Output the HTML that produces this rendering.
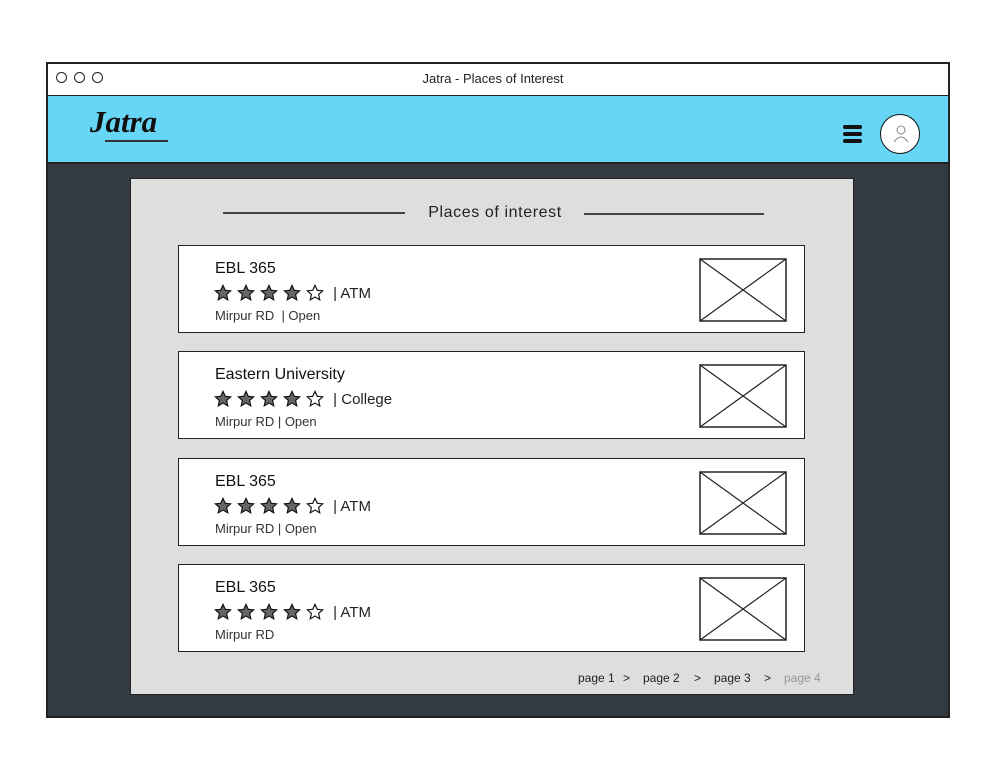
<!DOCTYPE html>
<html><head><meta charset="utf-8"><style>
body{margin:0;width:986px;height:774px;background:#fff;position:relative;font-family:"Liberation Sans",sans-serif;overflow:hidden}
.abs{position:absolute;box-sizing:border-box}
.card{position:absolute;left:178px;width:627px;height:88px;background:#fff;border:1.5px solid #222;box-sizing:border-box}
.t{position:absolute;left:36px;top:14px;font-size:16px;color:#111}
.r{position:absolute;left:35px;top:38px;display:flex;align-items:center;font-size:15px;color:#222}
.r svg{margin-right:5px}
.m{position:absolute;left:36px;top:62px;font-size:13px;color:#333}
.img{position:absolute;left:520px;top:12px;width:88px;height:64px}
.pg{position:absolute;top:671px;font-size:12px;color:#222}
</style></head><body>
<div class="abs" style="left:46px;top:62px;width:904px;height:656px;border:2px solid #222;background:#333a42"></div>
<div class="abs" style="left:48px;top:64px;width:900px;height:32px;background:#fff;border-bottom:1.5px solid #222"></div>
<div class="abs" style="left:56px;top:72px;width:11px;height:11px;border:1.5px solid #222;border-radius:50%"></div>
<div class="abs" style="left:74px;top:72px;width:11px;height:11px;border:1.5px solid #222;border-radius:50%"></div>
<div class="abs" style="left:92px;top:72px;width:11px;height:11px;border:1.5px solid #222;border-radius:50%"></div>
<div class="abs" style="left:0;width:986px;top:71px;text-align:center;font-size:13px;color:#222">Jatra - Places of Interest</div>
<div class="abs" style="left:48px;top:96px;width:900px;height:68px;background:#67d5f5;border-bottom:2px solid #222"></div>
<div class="abs" style="left:90px;top:104px;font-family:'Liberation Serif',serif;font-style:italic;font-weight:bold;font-size:31px;color:#111">Jatra</div>
<div class="abs" style="left:105px;top:140px;width:63px;height:2px;background:#333"></div>
<div class="abs" style="left:843px;top:125px;width:19px;height:4px;background:#111;border-radius:2px"></div>
<div class="abs" style="left:843px;top:132px;width:19px;height:4px;background:#111;border-radius:2px"></div>
<div class="abs" style="left:843px;top:139px;width:19px;height:4px;background:#111;border-radius:2px"></div>
<div class="abs" style="left:880px;top:114px;width:40px;height:40px;border:1.5px solid #111;border-radius:50%;background:#fff"></div>
<svg class="abs" style="left:892px;top:124px" width="18" height="20"><circle cx="9" cy="6" r="4" fill="none" stroke="#888"/><path d="M2 18 Q9 8 16 18" fill="none" stroke="#888"/></svg>
<div class="abs" style="left:130px;top:178px;width:724px;height:517px;background:#dedede;border:1.5px solid #222"></div>
<div class="abs" style="left:223px;top:212px;width:182px;height:1.5px;background:#444"></div>
<div class="abs" style="left:584px;top:213px;width:180px;height:1.5px;background:#444"></div>
<div class="abs" style="left:405px;top:204px;width:180px;text-align:center;font-size:16px;letter-spacing:0.6px;color:#222">Places of interest</div>

<svg width="0" height="0" style="position:absolute"><defs>
<symbol id="s" viewBox="0 0 20 20"><path d="M10 1.5l2.5 5.5 6 .6-4.5 4 1.3 6-5.3-3.1-5.3 3.1 1.3-6-4.5-4 6-.6z" fill="#666" stroke="#111" stroke-width="1.3"/></symbol>
<symbol id="e" viewBox="0 0 20 20"><path d="M10 1.5l2.5 5.5 6 .6-4.5 4 1.3 6-5.3-3.1-5.3 3.1 1.3-6-4.5-4 6-.6z" fill="#fff" stroke="#111" stroke-width="1.3"/></symbol>
<symbol id="x" viewBox="0 0 88 64"><rect x="1" y="1" width="86" height="62" fill="#fff" stroke="#222" stroke-width="1.5"/><path d="M1 1L87 63M87 1L1 63" stroke="#222" stroke-width="1.2"/></symbol>
</defs></svg>

<div class="card" style="top:245px"><div class="t">EBL 365</div>
<div class="r"><svg width="18" height="18"><use href="#s"/></svg><svg width="18" height="18"><use href="#s"/></svg><svg width="18" height="18"><use href="#s"/></svg><svg width="18" height="18"><use href="#s"/></svg><svg width="18" height="18"><use href="#e"/></svg><span>&nbsp;| ATM</span></div>
<div class="m">Mirpur RD &nbsp;| Open</div><svg class="img"><use href="#x"/></svg></div>

<div class="card" style="top:351px"><div class="t">Eastern University</div>
<div class="r"><svg width="18" height="18"><use href="#s"/></svg><svg width="18" height="18"><use href="#s"/></svg><svg width="18" height="18"><use href="#s"/></svg><svg width="18" height="18"><use href="#s"/></svg><svg width="18" height="18"><use href="#e"/></svg><span>&nbsp;| College</span></div>
<div class="m">Mirpur RD | Open</div><svg class="img"><use href="#x"/></svg></div>

<div class="card" style="top:458px"><div class="t">EBL 365</div>
<div class="r"><svg width="18" height="18"><use href="#s"/></svg><svg width="18" height="18"><use href="#s"/></svg><svg width="18" height="18"><use href="#s"/></svg><svg width="18" height="18"><use href="#s"/></svg><svg width="18" height="18"><use href="#e"/></svg><span>&nbsp;| ATM</span></div>
<div class="m">Mirpur RD | Open</div><svg class="img"><use href="#x"/></svg></div>

<div class="card" style="top:564px"><div class="t">EBL 365</div>
<div class="r"><svg width="18" height="18"><use href="#s"/></svg><svg width="18" height="18"><use href="#s"/></svg><svg width="18" height="18"><use href="#s"/></svg><svg width="18" height="18"><use href="#s"/></svg><svg width="18" height="18"><use href="#e"/></svg><span>&nbsp;| ATM</span></div>
<div class="m">Mirpur RD</div><svg class="img"><use href="#x"/></svg></div>

<div class="pg" style="left:578px">page 1</div>
<div class="pg" style="left:623px">&gt;</div>
<div class="pg" style="left:643px">page 2</div>
<div class="pg" style="left:694px">&gt;</div>
<div class="pg" style="left:714px">page 3</div>
<div class="pg" style="left:764px">&gt;</div>
<div class="pg" style="left:784px;color:#999">page 4</div>
</body></html>
